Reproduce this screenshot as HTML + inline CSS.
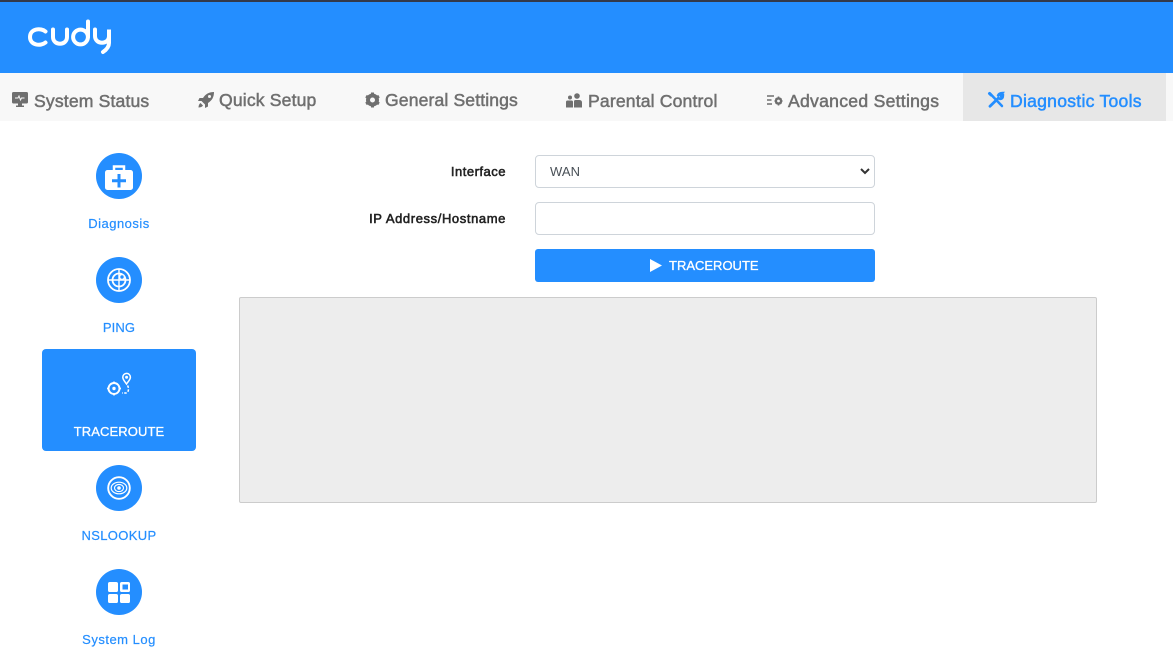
<!DOCTYPE html>
<html lang="en"><head><meta charset="utf-8"><title>Cudy - Traceroute</title>
<style>
html,body{margin:0;padding:0;width:1173px;height:671px;overflow:hidden;background:#fff;font-family:"Liberation Sans",sans-serif}
.a{position:absolute}
.top{left:0;top:0;width:1173px;height:2px;background:#33394a}
.hdr{left:0;top:2px;width:1173px;height:71px;background:#248eff}
.bar{left:0;top:73px;width:1173px;height:48px;background:#f8f8f8}
.act{left:963px;top:73px;width:203px;height:48px;background:#e7e7e7}
.tab{font-size:17.6px;letter-spacing:.15px;line-height:20px;color:#6f6f6f;white-space:nowrap;-webkit-text-stroke:.5px currentColor}
.ic{position:absolute;overflow:visible}
.circle{left:96px;width:46px;height:46px;border-radius:50%;background:#248eff}
.lbl{left:42px;width:154px;text-align:center;font-size:13px;line-height:16px;color:#248eff;white-space:nowrap;-webkit-text-stroke:.2px #248eff}
.sel{left:42px;top:349px;width:154px;height:102px;background:#248eff;border-radius:4px}
.flab{width:200px;text-align:right;left:306px;font-size:13px;letter-spacing:.5px;line-height:16px;color:#222;-webkit-text-stroke:.55px #222;white-space:nowrap}
.inp{left:535px;width:338px;height:31px;border:1px solid #ced4da;border-radius:4px;background:#fff}
.btn{left:535px;top:249px;width:340px;height:33px;background:#248eff;border-radius:3px}
.out{left:239px;top:297px;width:856px;height:204px;background:#ededed;border:1px solid #ccc;border-radius:2px}
</style></head><body>
<div class="a top"></div>
<div class="a hdr"></div>
<svg class="ic" style="left:0;top:0" width="130" height="60" viewBox="0 0 130 60" fill="none" stroke="#fff" stroke-width="4" stroke-linecap="round" role="img" aria-label="cudy">
<path d="M45.500 31.500C41 27.600 30 28.500 30 37C30 45.500 41 46.400 45.500 42.500"/>
<path d="M53 29.500V37C53 46 67 46 67 37V29.500"/>
<circle cx="80.500" cy="37" r="7.400"/><path d="M88 21.500V37"/>
<path d="M95 29.500V36C95 45 109 45 109 36V29.500V43C109 47.500 106 50 103 52"/>
</svg>
<div class="a bar"></div>
<div class="a act"></div>

<svg class="ic" style="left:12px;top:92px" width="16" height="16" viewBox="0 0 16 16"><path fill="#6f6f6f" d="M1.500 0h13A1.500 1.500 0 0 1 16 1.500v8.500A1.500 1.500 0 0 1 14.500 11.500H10v2h2V15H4v-1.500h2v-2H1.500A1.500 1.500 0 0 1 0 10V1.500A1.500 1.500 0 0 1 1.500 0z"/><path fill="none" stroke="#f8f8f8" d="M3 6h3l1-2 1.500 4 1-2h3"/></svg>
<div class="a tab" style="left:34px;top:91px">System Status</div>

<svg class="ic" style="left:198px;top:92px" width="16" height="16" viewBox="0 0 16 16"><path fill="#6f6f6f" d="M16 0C11 0 7.500 2 5 6H1.500L0 9h3.500L7 12.500V16l3-1.500V11c4-2.500 6-6 6-11zM11.500 3a1.500 1.500 0 1 1 0 3 1.500 1.500 0 0 1 0-3zM2.500 11C1 12 .5 14 .5 15.500 2 15.500 4 15 5 13.500z"/></svg>
<div class="a tab" style="left:219px;top:90px">Quick Setup</div>

<svg class="ic" style="left:365px;top:92px" width="15" height="16" viewBox="0 0 15 16"><circle cx="7.500" cy="8" r="4.500" fill="none" stroke="#6f6f6f" stroke-width="4"/><path stroke="#6f6f6f" stroke-width="3" d="M7.500 .5v3M7.500 12.500v3M1 4.200l2.600 1.500M11.400 10.300L14 11.800M1 11.800l2.600-1.500M11.400 5.700L14 4.200"/></svg>
<div class="a tab" style="left:385px;top:90px;letter-spacing:.12px">General Settings</div>

<svg class="ic" style="left:566px;top:93px" width="16" height="15" viewBox="0 0 16 15"><g fill="#6f6f6f"><circle cx="4" cy="4.500" r="2"/><circle cx="11" cy="3" r="2.800"/><path d="M0 9Q0 7.500 1.500 7.500h4Q7 7.500 7 9V14.500H0zM8 8.500Q8 7 9.500 7h3.500Q16 7 16 9.500V14.500H8z"/></g></svg>
<div class="a tab" style="left:588px;top:91px">Parental Control</div>

<svg class="ic" style="left:767px;top:95px" width="16" height="12" viewBox="0 0 16 12"><path stroke="#6f6f6f" stroke-width="1.500" d="M0 1h7M0 5h4.500M0 9h5"/><circle cx="11.500" cy="6" r="2.600" fill="none" stroke="#6f6f6f" stroke-width="2.400"/><path stroke="#6f6f6f" stroke-width="1.600" d="M11.500 1.500v2M11.500 8.500v2M7.500 6h2M13.500 6h2M8.700 3.200l1.300 1.300M13 7.500l1.300 1.300M8.700 8.800L10 7.500M13 4.500l1.300-1.300"/></svg>
<div class="a tab" style="left:788px;top:91px;letter-spacing:.27px">Advanced Settings</div>

<svg class="ic" style="left:988px;top:92px" width="16" height="16" viewBox="0 0 16 16"><g fill="none" stroke="#248eff" stroke-linecap="round"><path stroke-width="2.800" d="M2 14.300L10.500 6"/><path stroke-width="2.400" d="M10 3.500Q11 1 14.500 1L12.500 3.500 13 4.500 15 3.500Q15 7 12 7"/><path stroke-width="2.500" d="M2 1.500L14 14"/><path stroke-width="3" d="M1.500 1.500l1.500 1.500"/></g></svg>
<div class="a tab" style="left:1010px;top:91px;color:#248eff;letter-spacing:.25px">Diagnostic Tools</div>

<!-- sidebar -->
<div class="a circle" style="top:153px"></div>
<svg class="ic" style="left:105px;top:164px" width="28" height="27" viewBox="0 0 28 27"><path fill="none" stroke="#fff" stroke-width="2.500" d="M9 7V2.500h10V7"/><rect y="6" width="28" height="20" rx="2.500" fill="#fff"/><path stroke="#248eff" stroke-width="3" d="M14 10v13.500M7 16.800h14"/></svg>
<div class="a lbl" style="top:216px;letter-spacing:.5px">Diagnosis</div>

<div class="a circle" style="top:257px"></div>
<svg class="ic" style="left:107px;top:268px" width="24" height="24" viewBox="0 0 24 24" fill="none" stroke="#fff"><circle cx="12" cy="12" r="11" stroke-width="1.800"/><circle cx="12" cy="12" r="6.500" stroke-width="1.800"/><path stroke-width="1.400" d="M12 1v22M1 12h22"/><circle cx="15" cy="9" r="2.400" fill="#248eff" stroke-width="1.400"/></svg>
<div class="a lbl" style="top:320px;letter-spacing:.1px">PING</div>

<div class="a sel"></div>
<svg class="ic" style="left:107px;top:372px" width="26" height="24" viewBox="0 0 26 24" fill="none" stroke="#fff"><circle cx="7" cy="16.500" r="5.500" stroke-width="1.900"/><circle cx="7" cy="16.500" r="1.700" fill="#fff" stroke="none"/><path stroke-width="1.500" d="M7 9.500v2.500M7 21v2.500M0 16.500h2.500M11.500 16.500H14"/><path stroke-width="1.500" d="M19.500 12C17.800 9.500 15.800 7.500 15.800 5.200a3.800 3.800 0 0 1 7.600 0C23.400 7.500 21.200 9.500 19.500 12z"/><circle cx="19.600" cy="5.200" r="1.500" fill="#fff" stroke="none"/><path stroke-width="1.500" stroke-dasharray="2.500 1.500" d="M20.500 13.500C22 15.500 22 20.500 19 21H15"/></svg>
<div class="a lbl" style="top:424px;color:#fff;-webkit-text-stroke:.3px #fff;letter-spacing:.1px">TRACEROUTE</div>

<div class="a circle" style="top:465px"></div>
<svg class="ic" style="left:107px;top:476px" width="24" height="24" viewBox="0 0 24 24" fill="none" stroke="#fff"><circle cx="12" cy="12" r="10.800" stroke-width="1.900"/><ellipse cx="12" cy="12" rx="7.800" ry="5.800" stroke-width="1.200"/><ellipse cx="12" cy="12" rx="4.500" ry="3.600" stroke-width="1.100"/><circle cx="12" cy="12" r="1.800" fill="#fff" stroke="none"/></svg>
<div class="a lbl" style="top:528px;letter-spacing:.35px">NSLOOKUP</div>

<div class="a circle" style="top:569px"></div>
<svg class="ic" style="left:108px;top:582px" width="22" height="21" viewBox="0 0 22 21" fill="#fff"><rect width="10" height="10" rx="1.800"/><rect x="12" width="10" height="10" rx="1.800"/><rect x="14.500" y="2.500" width="5.500" height="5" fill="#248eff"/><rect y="12" width="10" height="9" rx="1.800"/><rect x="12" y="12" width="10" height="9" rx="1.800"/></svg>
<div class="a lbl" style="top:632px;letter-spacing:.5px">System Log</div>

<!-- form -->
<div class="a flab" style="top:164px">Interface</div>
<div class="a inp" style="top:155px"></div>
<div class="a" style="left:550px;top:164px;font-size:13px;letter-spacing:.1px;line-height:16px;color:#495057">WAN</div>
<svg class="ic" style="left:860px;top:168px" width="10" height="7" viewBox="0 0 10 7"><path fill="none" stroke="#333" stroke-width="2" d="M1 1l4 4 4-4"/></svg>

<div class="a flab" style="top:211px;letter-spacing:.6px">IP Address/Hostname</div>
<div class="a inp" style="top:202px"></div>

<div class="a btn"></div>
<svg class="ic" style="left:650px;top:259px" width="12" height="13" viewBox="0 0 12 13"><path fill="#fff" d="M0 0L12 6.500 0 13z"/></svg>
<div class="a" style="left:669px;top:258px;font-size:13px;line-height:16px;color:#fff;-webkit-text-stroke:.3px #fff">TRACEROUTE</div>

<div class="a out"></div>
</body></html>
